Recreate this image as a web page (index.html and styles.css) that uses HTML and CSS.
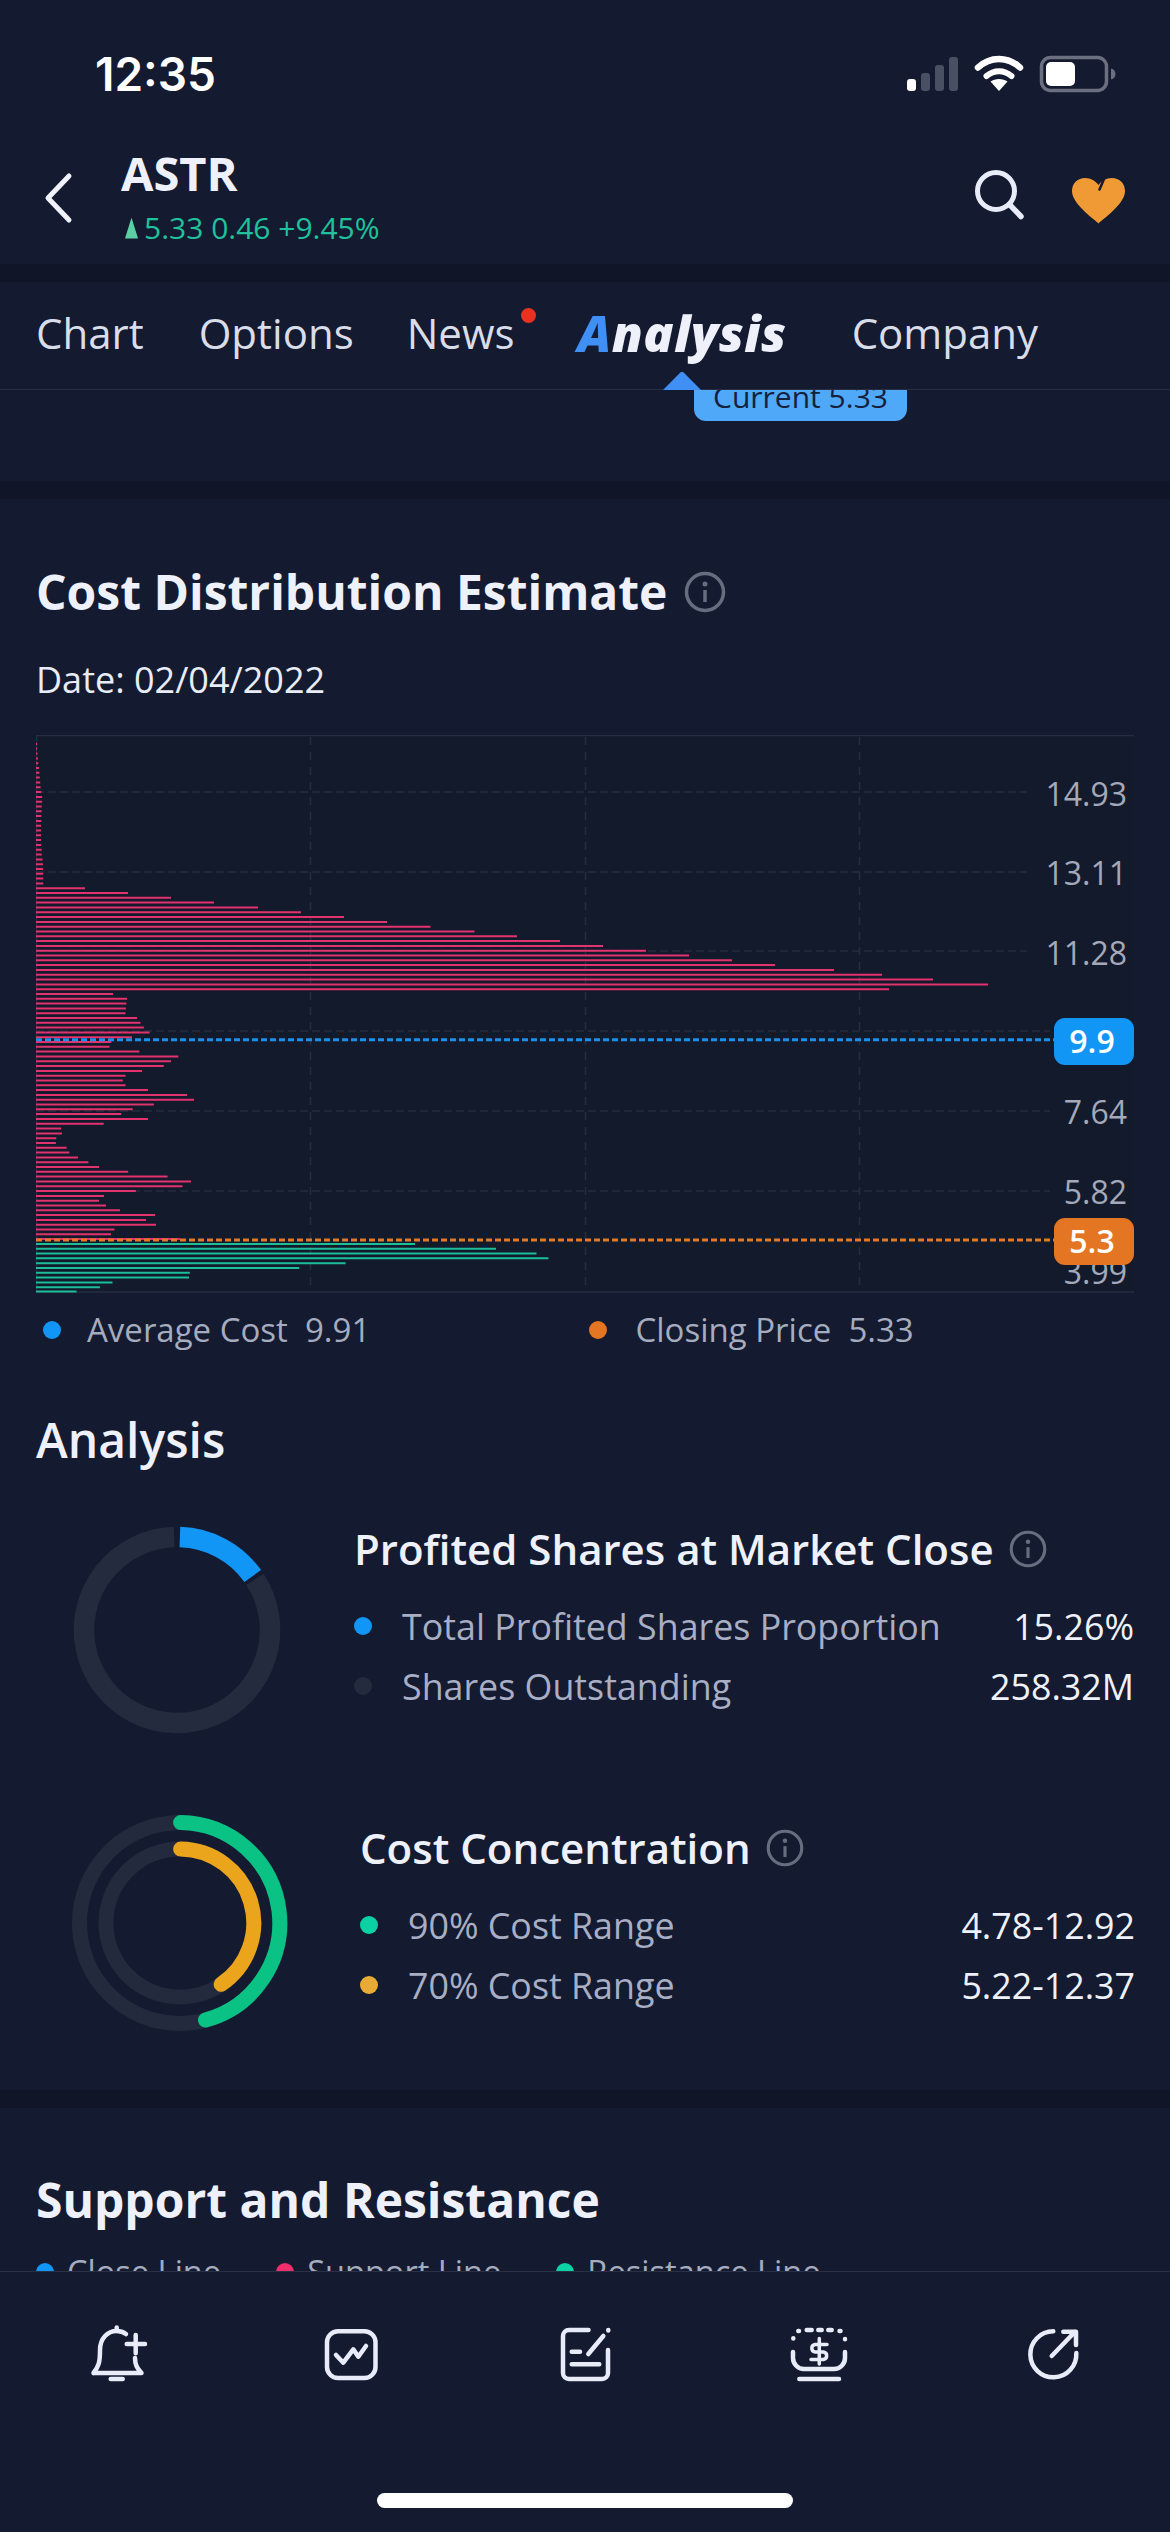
FILE: index.html
```html
<!DOCTYPE html>
<html lang="en">
<head>
<meta charset="utf-8">
<title>ASTR Analysis</title>
<link rel="stylesheet" href="styles.css">
</head>
<body>
<div class="app">
  <div class="status">
    <span class="time">12:35</span>
    <svg class="status-icons" width="220" height="44" viewBox="900 52 220 44">
      <rect x="907" y="79" width="9" height="12" rx="3" fill="#fff"/>
      <rect x="921" y="73" width="9" height="18" rx="3" fill="#4a5064"/>
      <rect x="935" y="65" width="9" height="26" rx="3" fill="#4a5064"/>
      <rect x="949" y="57" width="9" height="34" rx="3" fill="#4a5064"/>
      <path d="M978 67.500C990 56 1008 56 1020 67.500" fill="none" stroke="#fff" stroke-width="6.500" stroke-linecap="round"/>
      <path d="M986.500 76C994 69.500 1004 69.500 1011.500 76" fill="none" stroke="#fff" stroke-width="6" stroke-linecap="round"/>
      <path d="M990.500 81.500C995 78 1003 78 1007.500 81.500L999 91Z" fill="#fff"/>
      <rect x="1041.500" y="57.500" width="65" height="33" rx="9" fill="none" stroke="#6b7080" stroke-width="3.500"/>
      <rect x="1046" y="62" width="29" height="24" rx="5" fill="#fff"/>
      <path d="M1111 68.500C1114 69 1115.500 71.500 1115.500 74C1115.500 76.500 1114 79 1111 79.500Z" fill="#6b7080"/>
    </svg>
  </div>

  <header class="header">
    <svg class="back" width="30" height="52" viewBox="0 0 30 52"><path d="M26 4L5 26L26 48" fill="none" stroke="#f0f2fa" stroke-width="5" stroke-linecap="round" stroke-linejoin="round"/></svg>
    <div class="quote">
      <div class="symbol">ASTR</div>
      <div class="price"><span class="up-arrow"></span>5.33 0.46 +9.45%</div>
    </div>
    <svg class="search" width="56" height="56" viewBox="0 0 56 56"><circle cx="23" cy="23" r="18.500" fill="none" stroke="#e8ecf8" stroke-width="5"/><path d="M37 37L48 48.500" stroke="#e8ecf8" stroke-width="5.500" stroke-linecap="round"/></svg>
    <svg class="heart" width="60" height="50" viewBox="0 0 60 50"><path d="M29.500 47.500C24 42 3 28 3 15C3 7 9 2 16 2C22 2 26.500 5 29.500 9C32.500 5 37 2 43 2C50 2 56 7 56 15C56 28 35 42 29.500 47.500Z" fill="#f09a35"/><path d="M35 3L30.500 13.500" stroke="#141a30" stroke-width="2.500" stroke-linecap="round"/></svg>
  </header>

  <div class="band"></div>

  <nav class="tabs">
    <span class="tab tab-chart">Chart</span>
    <span class="tab tab-options">Options</span>
    <span class="tab tab-news">News<i class="red-dot"></i></span>
    <span class="tab tab-active"><b class="tab-a">A</b>nalysis</span>
    <span class="tab tab-company">Company</span>
    <i class="tab-caret"></i>
  </nav>

  <main class="main">
    <div class="tip-area">
      <div class="tip"><span class="tip-text">Current 5.33</span></div>
    </div>
    <div class="band"></div>

    <section class="cost">
      <h2 class="section-title">Cost Distribution Estimate
        <svg class="info info-lg" width="42" height="42" viewBox="0 0 42 42"><circle cx="21" cy="21" r="18.500" fill="none" stroke="#666d7e" stroke-width="3.500"/><circle cx="21" cy="13" r="2.500" fill="#666d7e"/><path d="M21 19V31" stroke="#666d7e" stroke-width="3.500"/></svg>
      </h2>
      <div class="date">Date: 02/04/2022</div>

      <svg class="chart" width="1098" height="558" viewBox="36 735 1098 558">
        <rect x="36" y="735" width="1098" height="557" fill="#131a2b"/>
        <path d="M36 735.500H1134M36 1292H1134M36.500 735V1292" fill="none" stroke="#272e3f" stroke-width="1.500"/>
        <path d="M310.500 737V1292M585.500 737V1292M859.500 737V1292" fill="none" stroke="#262d3e" stroke-width="1.500" stroke-dasharray="8 7"/>
        <path d="M36 792H1027M36 872H1027M36 951H1027M36 1031H1050M36 1111H1050M36 1191H1050" fill="none" stroke="#262d3e" stroke-width="1.500" stroke-dasharray="8 4"/>
        <path class="bars-red" d="M36 744H37.100M36 748.800H37.100M36 753.600H37.500M36 758.400H37.900M36 763.200H38.300M36 768H39M36 772.800H39.400M36 777.600H39.800M36 782.500H40.200M36 787.300H40.600M36 792.100H41.300M36 796.900H42.100M36 801.700H42.100M36 806.500H41.700M36 811.300H41.700M36 816.100H41.300M36 820.900H41.300M36 825.700H41M36 830.500H41M36 835.300H41M36 840.100H41M36 845H41.300M36 849.800H41.700M36 854.600H41.700M36 859.400H42.500M36 864.200H42.900M36 869H42.900M36 873.800H43.200M36 878.600H43.200M36 883.400H43.200M36 888.200H85M36 893H128M36 897.800H171M36 902.600H214M36 907.400H258M36 912.200H301M36 917.100H344M36 921.900H387M36 926.700H430.500M36 931.500H474.500M36 936.300H517M36 941.100H560M36 945.900H603M36 950.700H646M36 955.500H689M36 960.300H732M36 965.100H775M36 969.900H834M36 974.700H882M36 979.500H933M36 984.400H988M36 989.200H889M36 994H113M36 998.800H127M36 1003.600H126.300M36 1008.400H125.900M36 1013.200H125.500M36 1018H137M36 1022.800H140.500M36 1027.600H143.900M36 1032.400H149.600M36 1037.200H132M36 1042H111.400M36 1046.800H109.500M36 1051.600H139.300M36 1056.500H178.300M36 1061.300H171M36 1066.100H163.800M36 1070.900H142M36 1075.700H125.500M36 1080.500H122.800M36 1085.300H125.500M36 1090.100H148M36 1094.900H187M36 1099.700H194M36 1104.500H153.800M36 1109.300H132.800M36 1114.100H121.300M36 1118.900H148M36 1123.800H103.700M36 1128.600H61.200M36 1133.400H62M36 1138.200H56.300M36 1143H55.900M36 1147.800H66.600M36 1152.600H69.300M36 1157.400H78M36 1162.200H88.400M36 1167H99M36 1171.800H128.200M36 1176.600H167.600M36 1181.400H191M36 1186.200H182.500M36 1191H135.900M36 1195.900H104M36 1200.700H99M36 1205.500H106M36 1210.300H120M36 1215.100H155M36 1219.900H146M36 1224.700H156M36 1229.500H114.400M36 1234.300H111M36 1239.100H180"/>
        <path class="bars-green" d="M36 1243.900H415M36 1248.700H496M36 1253.600H536.500M36 1258.300H548.400M36 1263.200H345.600M36 1268H299.300M36 1272.800H189.800M36 1277.500H189M36 1282.400H112.500M36 1287.200H99.900M36 1291.500H76.500"/>
        <text class="axis" x="1127" y="806">14.93</text>
        <text class="axis" x="1127" y="885">13.11</text>
        <text class="axis" x="1127" y="965">11.28</text>
        <text class="axis" x="1127" y="1124">7.64</text>
        <text class="axis" x="1127" y="1204">5.82</text>
        <text class="axis" x="1127" y="1284">3.99</text>
        <path d="M36 1039.700H1054" stroke="#1b91ec" stroke-width="3" stroke-dasharray="6 3"/>
        <path d="M36 1240H1054" stroke="#e27a26" stroke-width="3" stroke-dasharray="6 3"/>
        <rect x="1054" y="1018" width="80" height="47" rx="11" fill="#1296f5"/>
        <text class="badge-text" x="1092" y="1053">9.9</text>
        <rect x="1054" y="1218" width="80" height="47" rx="11" fill="#e47522"/>
        <text class="badge-text" x="1092" y="1253">5.3</text>
      </svg>

      <div class="chart-legend">
        <div class="legend-item"><i class="dot dot-blue"></i><span>Average Cost&nbsp; 9.91</span></div>
        <div class="legend-item legend-item-2"><i class="dot dot-orange"></i><span>Closing Price&nbsp; 5.33</span></div>
      </div>

      <h3 class="analysis-title">Analysis</h3>

      <div class="metric metric-profit">
        <svg class="ring" width="208" height="208" viewBox="73 1526 208 208">
          <path d="M255 1579.400A93 93 0 1 1 174.100 1537.050" fill="none" stroke="#252b3f" stroke-width="20.500"/>
          <path d="M179.900 1537.050A93 93 0 0 1 252.700 1576" fill="none" stroke="#1296f5" stroke-width="20.500"/>
        </svg>
        <div class="metric-info">
          <div class="metric-title">Profited Shares at Market Close
            <svg class="info" width="38" height="38" viewBox="0 0 42 42"><circle cx="21" cy="21" r="18.500" fill="none" stroke="#666d7e" stroke-width="3.500"/><circle cx="21" cy="13" r="2.500" fill="#666d7e"/><path d="M21 19V31" stroke="#666d7e" stroke-width="3.500"/></svg>
          </div>
          <div class="row"><i class="dot dot-blue"></i><span class="row-label">Total Profited Shares Proportion</span><span class="row-value">15.26%</span></div>
          <div class="row"><i class="dot dot-gray"></i><span class="row-label">Shares Outstanding</span><span class="row-value">258.32M</span></div>
        </div>
      </div>

      <div class="metric metric-conc">
        <svg class="ring" width="217" height="217" viewBox="72 1815 217 217">
          <circle cx="180" cy="1923" r="100.500" fill="none" stroke="#232a3e" stroke-width="15"/>
          <circle cx="180" cy="1923" r="74" fill="none" stroke="#232a3e" stroke-width="15"/>
          <path d="M180.600 1822.500A100.500 100.500 0 0 1 205.500 2020" fill="none" stroke="#0bc285" stroke-width="15" stroke-linecap="round"/>
          <path d="M180.600 1849A74 74 0 0 1 221.200 1984.300" fill="none" stroke="#eaa51c" stroke-width="15" stroke-linecap="round"/>
        </svg>
        <div class="metric-info">
          <div class="metric-title">Cost Concentration
            <svg class="info" width="38" height="38" viewBox="0 0 42 42"><circle cx="21" cy="21" r="18.500" fill="none" stroke="#666d7e" stroke-width="3.500"/><circle cx="21" cy="13" r="2.500" fill="#666d7e"/><path d="M21 19V31" stroke="#666d7e" stroke-width="3.500"/></svg>
          </div>
          <div class="row"><i class="dot dot-teal"></i><span class="row-label">90% Cost Range</span><span class="row-value">4.78-12.92</span></div>
          <div class="row"><i class="dot dot-amber"></i><span class="row-label">70% Cost Range</span><span class="row-value">5.22-12.37</span></div>
        </div>
      </div>
    </section>

    <div class="band"></div>

    <section class="support">
      <h2 class="section-title">Support and Resistance</h2>
      <div class="support-legend">
        <div class="s-item"><i class="dot dot-blue"></i>Close Line</div>
        <div class="s-item"><i class="dot dot-pink"></i>Support Line</div>
        <div class="s-item"><i class="dot dot-teal"></i>Resistance Line</div>
      </div>
    </section>
  </main>

  <footer class="toolbar">
    <div class="tools">
      <svg class="tool" width="80" height="70" viewBox="0 0 80 70"><path d="M16.500 53H64.500C60 48 58 45 58 38M16.500 53C22 46 23 42 23 30C23 18 31 11 39.500 11C43 11 46.500 12 49 14M49.700 24H68M58.700 15V33.300M33.700 59H45.700M39.700 7.500V9"/></svg>
      <svg class="tool" width="80" height="70" viewBox="0 0 80 70"><rect x="16" y="11.300" width="48.500" height="46.700" rx="11"/><path d="M25 35L32.300 42.700L42.300 29.300L47.300 36.700L55 26"/></svg>
      <svg class="tool" width="80" height="70" viewBox="0 0 80 70"><path d="M43.500 10H24A6 6 0 0 0 18 16V53A6 6 0 0 0 24 59H57A6 6 0 0 0 63 53V30M43.300 34L58.300 16M63.300 10.500V10M26.700 31.700H35M26.700 44.300H54.300"/></svg>
      <svg class="tool" width="80" height="70" viewBox="0 0 80 70"><path d="M14.300 18.300V18.500M19.300 11H20M27.700 10H32.700M39.300 10H42.700M49.300 10H52.700M60.500 11H61.500M66 19V19.300M14 32V38A11 11 0 0 0 25 49H55A11 11 0 0 0 66 38V32M20.300 59H60"/><path class="thin" d="M48 24.500H36A3.800 3.800 0 0 0 36 32H44.500A3.800 3.800 0 0 1 44.500 39.500H32M40.300 18.500V44"/></svg>
      <svg class="tool" width="80" height="70" viewBox="0 0 80 70"><path d="M40.300 11.300A23 23 0 1 0 63.300 33M38.700 36L62 11.700M50.300 11.700H63V25"/></svg>
    </div>
    <div class="home"></div>
  </footer>
</div>
</body>
</html>
```

FILE: styles.css
```css
* { box-sizing: border-box; }
html, body { margin: 0; padding: 0; background: #141a30; }
h2, h3 { margin: 0; }
i { display: block; }

.app {
  width: 1170px;
  height: 2532px;
  display: flex;
  flex-direction: column;
  overflow: hidden;
  background: #141a30;
  color: #eef1fa;
  font-family: "Open Sans", "Noto Sans", sans-serif;
}

/* status bar */
.status {
  flex: none;
  height: 118px;
  padding: 30px 50px 0 95px;
  display: flex;
  align-items: center;
  justify-content: space-between;
}
.time {
  font-family: Inter, "Liberation Sans", sans-serif;
  font-weight: 600;
  font-size: 46px;
  line-height: 46px;
  color: #fff;
}
.status-icons { display: block; }

/* header */
.header {
  flex: none;
  height: 146px;
  padding: 32px 41px 0 43px;
  display: flex;
  align-items: flex-start;
}
.back { flex: none; margin-top: 22px; }
.quote { margin-left: 48px; }
.symbol {
  font-weight: 700;
  font-size: 47px;
  line-height: 47px;
}
.price {
  margin-top: 16px;
  display: flex;
  align-items: center;
  font-size: 30px;
  line-height: 30px;
  color: #1fc29c;
}
.up-arrow {
  display: block;
  width: 13px;
  height: 21px;
  margin: 0 6px 0 4px;
  background: #5ccfa5;
  clip-path: polygon(50% 0, 100% 100%, 0 100%);
}
.search { flex: none; margin: 18px 0 0 auto; }
.heart { flex: none; margin: 26px 0 0 40px; }

.band {
  flex: none;
  height: 18px;
  background: #101527;
}

/* tabs */
.tabs {
  flex: none;
  position: relative;
  height: 108px;
  padding: 0 0 6px 36px;
  display: flex;
  align-items: center;
  border-bottom: 1px solid #272d42;
}
.tab {
  font-size: 42px;
  line-height: 50px;
  color: #d9ddea;
  margin-right: 56px;
}
.tab-chart { margin-right: 55px; }
.tab-options { margin-right: 53px; }
.tab-news { position: relative; margin-right: 63px; }
.red-dot {
  position: absolute;
  top: 0;
  right: -22px;
  width: 15px;
  height: 15px;
  border-radius: 50%;
  background: #e8321f;
}
.tab-active {
  font-style: italic;
  font-weight: 800;
  font-size: 50px;
  letter-spacing: 0.5px;
  color: #eef1fa;
  margin-right: 65px;
}
.tab-a { font-weight: 800; color: #3f8ff5; }
.tab-caret {
  position: absolute;
  left: 663px;
  bottom: -1px;
  width: 38px;
  height: 18px;
  background: #3f8ff5;
  clip-path: polygon(0 100%, 47% 0, 53% 0, 100% 100%);
}

/* main */
.main {
  flex: 1;
  min-height: 0;
  overflow: hidden;
}
.tip-area {
  position: relative;
  height: 91px;
}
.tip {
  position: absolute;
  left: 694px;
  top: 0;
  width: 213px;
  height: 31px;
  overflow: hidden;
  border-radius: 0 0 12px 12px;
  background: #4fa9f8;
  color: #14203c;
  text-align: center;
  font-size: 30px;
  line-height: 30px;
}
.tip-text { display: block; margin-top: -8px; }

.cost { padding: 0 36px; height: 1591px; }
.section-title {
  display: flex;
  align-items: center;
  gap: 17px;
  font-weight: 700;
  font-size: 48px;
  line-height: 60px;
}
.cost > .section-title { padding-top: 63px; height: 123px; }
.info { flex: none; display: block; }
.date {
  margin-top: 36px;
  font-size: 36px;
  line-height: 44px;
  color: #e8ecf5;
}
.chart { display: block; margin-top: 33px; }
.bars-red { fill: none; stroke: #e2336e; stroke-width: 2; }
.bars-green { fill: none; stroke: #1cbd99; stroke-width: 2; }
.axis {
  font-family: "Open Sans", sans-serif;
  font-size: 32px;
  fill: #a3a9ba;
  text-anchor: end;
}
.badge-text {
  font-family: "Open Sans", sans-serif;
  font-size: 32px;
  font-weight: 600;
  fill: #fff;
  text-anchor: middle;
}

.chart-legend {
  display: flex;
  margin-top: 17px;
  height: 40px;
  padding-left: 7px;
}
.legend-item {
  display: flex;
  align-items: center;
  gap: 26px;
  width: 550px;
  font-size: 33px;
  line-height: 40px;
  color: #a6acbf;
}
.legend-item-2 { gap: 29px; }
.dot {
  flex: none;
  width: 18px;
  height: 18px;
  border-radius: 50%;
}
.dot-blue { background: #1296f5; }
.dot-orange { background: #e47522; }
.dot-gray { background: #252b3f; }
.dot-teal { background: #0ad2a5; }
.dot-amber { background: #e9ab36; }
.dot-pink { background: #ee2f6b; }

.analysis-title {
  margin-top: 62px;
  font-weight: 600;
  font-size: 48px;
  line-height: 56px;
}

.metric { display: flex; }
.metric-profit { margin-top: 58px; margin-left: 37px; height: 289px; }
.metric-conc { margin-left: 36px; height: 216px; }
.ring { flex: none; display: block; }
.metric-info { flex: 1; }
.metric-profit .metric-info { margin-left: 73px; }
.metric-conc .metric-info { margin-left: 71px; }
.metric-title {
  display: flex;
  align-items: center;
  gap: 15px;
  font-weight: 600;
  font-size: 42px;
  line-height: 52px;
  margin-top: -3px;
  margin-bottom: 21px;
}
.metric-conc .metric-title { margin-top: 7px; margin-bottom: 21px; }
.row {
  display: flex;
  align-items: center;
  height: 60px;
  font-size: 35.800px;
}
.row-label { margin-left: 30px; color: #a8aec4; }
.row-value { margin-left: auto; color: #eef1fa; }
.metric-conc .row-value { margin-right: -1px; }

.support { padding: 0 36px; }
.support .section-title { padding-top: 62px; }
.support-legend {
  display: flex;
  margin-top: 22px;
  font-size: 32.600px;
  line-height: 40px;
  color: #a6acbf;
}
.s-item { display: flex; align-items: center; gap: 13px; margin-right: 55px; }

/* toolbar */
.toolbar {
  flex: none;
  height: 261px;
  padding-top: 48px;
  border-top: 1px solid #2a3045;
  background: #141a30;
}
.tools { display: flex; justify-content: space-around; }
.tool {
  display: block;
  fill: none;
  stroke: #e8ecf8;
  stroke-width: 4.500;
  stroke-linecap: round;
  stroke-linejoin: round;
}
.tool .thin { stroke-width: 3.500; }
.home {
  width: 416px;
  height: 15px;
  margin: 103px auto 0;
  border-radius: 8px;
  background: #fff;
}
```
